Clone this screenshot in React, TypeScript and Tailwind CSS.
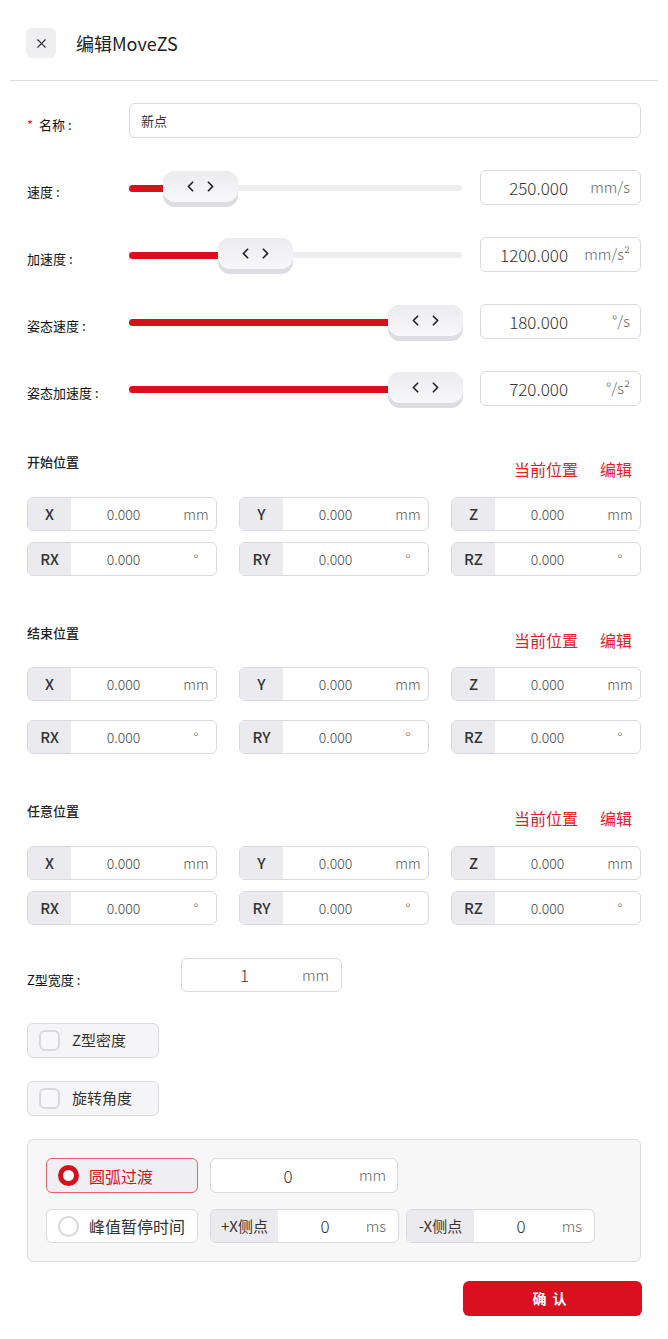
import { X, ChevronLeft, ChevronRight } from 'lucide-react';

const FONT = { fontFamily: '"Noto Sans CJK SC", "Noto Sans", sans-serif' };

interface SliderRowProps {
  label: string;
  value: string;
  unit: string;
  thumbLeft: number;
}

function SliderRow({ label, value, unit, thumbLeft }: SliderRowProps) {
  return (
    <div className="flex items-center h-[35px] mt-[32px]">
      <div className="w-[102px] mt-[8px] text-[13px] text-[#111]">{label}</div>
      <div className="relative w-[333px] h-[35px]">
        <div className="absolute left-0 right-0 top-[15px] h-[6px] rounded-full bg-[#ededef]" />
        <div
          className="absolute left-0 top-[15px] h-[7px] rounded-full bg-[#d8101e]"
          style={{ width: thumbLeft + 30 }}
        />
        <div
          className="absolute top-[1px] w-[75px] h-[36px] rounded-[12px] bg-[#dcdce1]"
          style={{ left: thumbLeft }}
        >
          <div className="h-[31px] rounded-[12px] bg-gradient-to-b from-[#ececef] to-[#f8f8fa] flex items-center justify-center gap-[3px] text-[#222]">
            <ChevronLeft size={17} strokeWidth={2.4} />
            <ChevronRight size={17} strokeWidth={2.4} />
          </div>
        </div>
      </div>
      <div className="ml-[18px] w-[161px] h-[35px] rounded-[6px] border border-[#d9d9de] flex items-center">
        <span className="flex-1 text-right text-[17px] font-light text-[#333]">{value}</span>
        <span className="w-[72px] pr-[10px] text-right text-[15px] font-light text-[#666]">{unit}</span>
      </div>
    </div>
  );
}

function AxisBox({ axis, unit }: { axis: string; unit: string }) {
  return (
    <div className="h-[34px] rounded-[6px] border border-[#d9d9de] flex items-stretch overflow-hidden">
      <div className="w-[43px] bg-[#ebebef] flex items-center justify-center text-[15px] font-medium text-[#333]">
        {axis}
      </div>
      <div className="flex-1 flex items-center justify-center text-[14px] font-light text-[#444]">0.000</div>
      <div className="w-[40px] flex items-center justify-center text-[14px] font-light text-[#555]">{unit}</div>
    </div>
  );
}

function PositionSection({ title, top, header, rowGap }: { title: string; top: string; header: string; rowGap: string }) {
  return (
    <div className={top}>
      <div className={`flex items-start justify-between ${header}`}>
        <div className="text-[13px] leading-[18px] font-medium text-[#222]">{title}</div>
        <div className="flex gap-[22px] mt-[6px] mr-[9px] text-[16px] leading-[20px] text-[#e3202e]">
          <span>当前位置</span>
          <span>编辑</span>
        </div>
      </div>
      <div className={`grid grid-cols-3 gap-x-[22px] ${rowGap}`}>
        <AxisBox axis="X" unit="mm" />
        <AxisBox axis="Y" unit="mm" />
        <AxisBox axis="Z" unit="mm" />
        <AxisBox axis="RX" unit="°" />
        <AxisBox axis="RY" unit="°" />
        <AxisBox axis="RZ" unit="°" />
      </div>
    </div>
  );
}

function CheckButton({ label, top }: { label: string; top: string }) {
  return (
    <div className={`${top} w-[132px] h-[35px] rounded-[6px] border border-[#dcdce0] bg-[#f5f5f7] flex items-center pl-[11px] gap-[12px]`}>
      <div className="w-[21px] h-[21px] rounded-[6px] border-2 border-[#d8d8de] bg-[#f8f8fa]" />
      <span className="text-[15px] text-[#333]">{label}</span>
    </div>
  );
}

function SideBox({ label }: { label: string }) {
  return (
    <div className="w-[189px] h-[34px] rounded-[6px] border border-[#d9d9de] bg-white flex items-stretch overflow-hidden">
      <div className="w-[67px] bg-[#ebebef] flex items-center justify-center text-[15px] text-[#333]">{label}</div>
      <div className="flex-1 flex items-center justify-center pl-[22px] text-[17px] font-light text-[#333]">0</div>
      <div className="w-[48px] pr-[12px] flex items-center justify-end text-[15px] font-light text-[#666]">ms</div>
    </div>
  );
}

export default function App() {
  return (
    <div className="w-[668px] min-h-[1339px] bg-white" style={FONT}>
      {/* Header */}
      <div className="h-[80px] pt-[28px] pl-[26px] flex items-start">
        <button className="w-[30px] h-[30px] rounded-[6px] bg-[#efeff2] flex items-center justify-center text-[#333]">
          <X size={15} strokeWidth={1.8} />
        </button>
        <div className="ml-[20px] h-[30px] flex items-center text-[18px] text-[#222]">编辑MoveZS</div>
      </div>
      <div className="mx-[10px] h-px bg-[#dcdce0]" />

      <div className="px-[27px]">
        {/* Name */}
        <div className="flex items-center h-[35px] mt-[22px]">
          <div className="w-[102px] mt-[8px] flex items-center text-[13px] text-[#111]">
            <span className="text-[#e0202d] mr-[6px]">*</span>名称 :
          </div>
          <div className="flex-1 h-[35px] rounded-[6px] border border-[#d9d9de] flex items-center pl-[11px] text-[13px] text-[#333]">
            新点
          </div>
        </div>

        <SliderRow label="速度 :" value="250.000" unit="mm/s" thumbLeft={34} />
        <SliderRow label="加速度 :" value="1200.000" unit="mm/s²" thumbLeft={89} />
        <SliderRow label="姿态速度 :" value="180.000" unit="°/s" thumbLeft={259} />
        <SliderRow label="姿态加速度 :" value="720.000" unit="°/s²" thumbLeft={259} />

        <PositionSection title="开始位置" top="mt-[47px]" header="h-[44px]" rowGap="gap-y-[11px]" />
        <PositionSection title="结束位置" top="mt-[48px]" header="h-[43px]" rowGap="gap-y-[19px]" />
        <PositionSection title="任意位置" top="mt-[48px]" header="h-[44px]" rowGap="gap-y-[11px]" />

        {/* Z width */}
        <div className="flex items-center h-[34px] mt-[33px]">
          <div className="w-[154px] mt-[10px] text-[13px] text-[#111]">Z型宽度 :</div>
          <div className="w-[161px] h-[34px] rounded-[6px] border border-[#d9d9de] flex items-center">
            <span className="flex-1 text-center pl-[18px] text-[17px] font-light text-[#333]">1</span>
            <span className="w-[52px] pr-[12px] text-right text-[15px] font-light text-[#666]">mm</span>
          </div>
        </div>

        <CheckButton label="Z型密度" top="mt-[31px]" />
        <CheckButton label="旋转角度" top="mt-[23px]" />

        {/* Transition panel */}
        <div className="mt-[23px] h-[123px] rounded-[6px] border border-[#dcdce0] bg-[#f7f7f8] px-[18px] pt-[18px]">
          <div className="flex items-center gap-[12px] h-[35px]">
            <div className="w-[152px] h-[35px] rounded-[6px] border border-[#e8606b] bg-[#efeff3] flex items-center pl-[11px] gap-[10px]">
              <div className="w-[21px] h-[21px] rounded-full border-[5px] border-[#d8101e] bg-white" />
              <span className="text-[16px] text-[#d8101e]">圆弧过渡</span>
            </div>
            <div className="w-[188px] h-[35px] rounded-[6px] border border-[#d9d9de] bg-white flex items-center">
              <span className="flex-1 text-center pl-[26px] text-[17px] font-light text-[#333]">0</span>
              <span className="w-[58px] pr-[11px] text-right text-[15px] font-light text-[#666]">mm</span>
            </div>
          </div>
          <div className="flex items-center h-[34px] mt-[16px]">
            <div className="w-[152px] h-[34px] rounded-[6px] border border-[#dcdce0] bg-white flex items-center pl-[11px] gap-[10px]">
              <div className="w-[21px] h-[21px] rounded-full border-2 border-[#d8d8de] bg-white" />
              <span className="text-[16px] text-[#333]">峰值暂停时间</span>
            </div>
            <div className="ml-[12px]">
              <SideBox label="+X侧点" />
            </div>
            <div className="ml-[7px]">
              <SideBox label="-X侧点" />
            </div>
          </div>
        </div>

        {/* Confirm */}
        <div className="flex justify-end mt-[19px]">
          <button className="w-[179px] h-[35px] mr-[-1px] rounded-[6px] bg-[#d9101f] text-white text-[14px] font-bold tracking-[6px]">
            确认
          </button>
        </div>
      </div>
    </div>
  );
}
